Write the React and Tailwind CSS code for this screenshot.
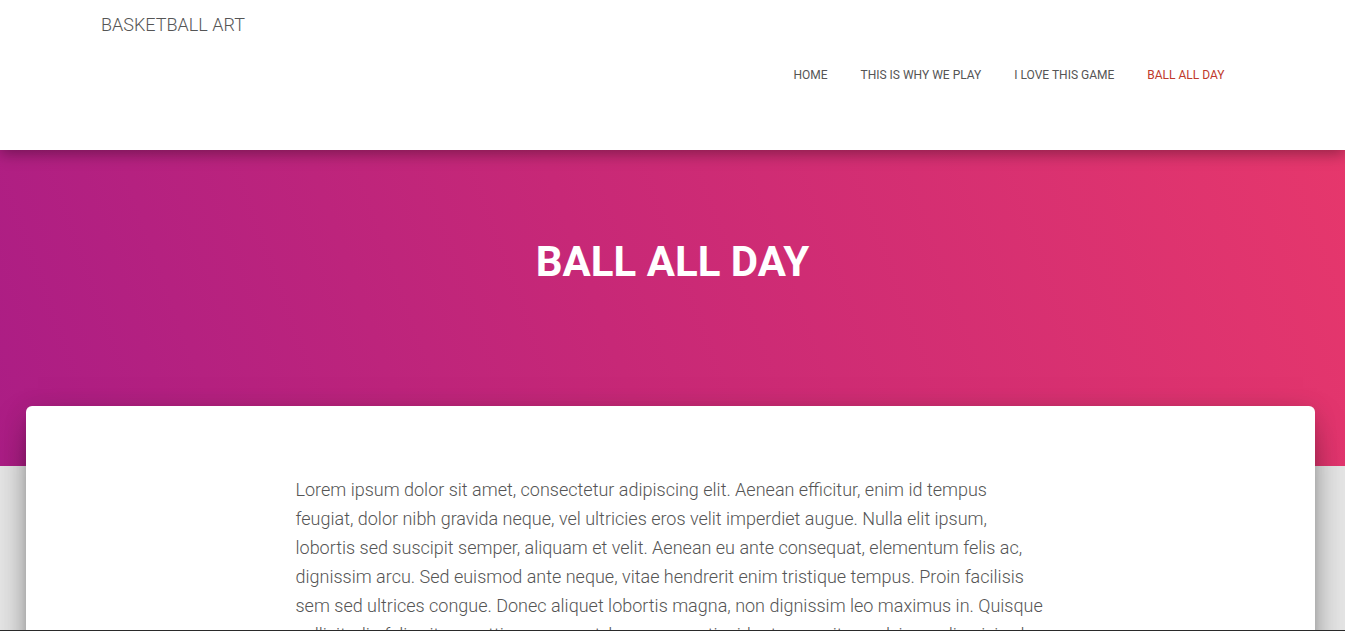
const links = [
  { label: 'Home' },
  { label: 'This is why we play' },
  { label: 'I love this game' },
  { label: 'Ball all day', active: true },
]

export default function App() {
  return (
    <div className="min-h-screen bg-[#e5e5e5] font-['Roboto',sans-serif]">
      {/* Navbar */}
      <header className="relative z-20 h-[150px] bg-white shadow-[0_4px_14px_0_rgba(0,0,0,0.35)]">
        <div className="ml-[86px] w-[1170px] px-[15px]">
          <div className="pt-[14px] text-[18px] font-light uppercase leading-[22px] text-[#555]">Basketball Art</div>
          <nav className="flex justify-end pt-[31px]">
            {links.map((l) => (
              <a
                key={l.label}
                href="#"
                className={`px-[16.5px] text-[12px] uppercase leading-[16px] ${l.active ? 'text-[#c0392b]' : 'text-[#555]'}`}
              >
                {l.label}
              </a>
            ))}
          </nav>
        </div>
      </header>

      {/* Hero */}
      <section className="h-[316px] bg-[linear-gradient(70deg,#ab1d85_0%,#c72877_45%,#e6376c_100%)] pt-[88px] text-center">
        <h1 className="text-[42px] font-bold uppercase leading-[48px] text-white">Ball all day</h1>
      </section>

      {/* Main card */}
      <main className="relative z-10 ml-[26px] mr-[30px] -mt-[60px] min-h-[400px] rounded-[6px] bg-white pt-[69px] pb-16 shadow-[0_16px_38px_-12px_rgba(0,0,0,0.56),0_4px_25px_0_rgba(0,0,0,0.12),0_8px_10px_-5px_rgba(0,0,0,0.2)]">
        <p className="mx-auto w-[750px] text-[18px] font-light leading-[29px] text-[#555]">
          Lorem ipsum dolor sit amet, consectetur adipiscing elit. Aenean efficitur, enim id tempus feugiat, dolor nibh
          gravida neque, vel ultricies eros velit imperdiet augue. Nulla elit ipsum, lobortis sed suscipit semper, aliquam
          et velit. Aenean eu ante consequat, elementum felis ac, dignissim arcu. Sed euismod ante neque, vitae hendrerit
          enim tristique tempus. Proin facilisis sem sed ultrices congue. Donec aliquet lobortis magna, non dignissim leo
          maximus in. Quisque sollicitudin felis vitae mattis consequat, lacus augue tincidunt urna, vitae pulvinar odio
          nisi vel ligula. Vivamus nec sapien in tellus egestas dignissim.
        </p>
      </main>

      <div className="fixed bottom-0 left-0 z-30 h-px w-full bg-[#2a2a2a]" />
    </div>
  )
}
